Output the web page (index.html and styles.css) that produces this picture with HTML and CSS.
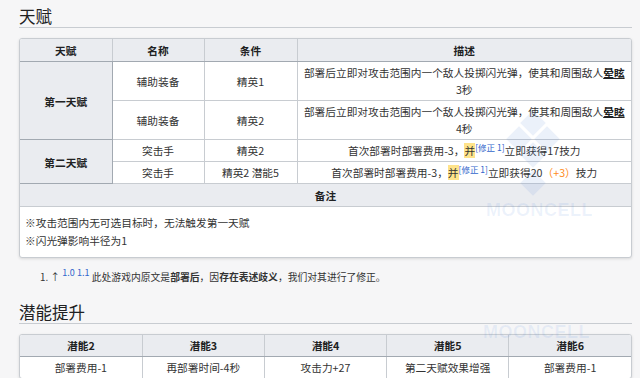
FILE: index.html
```html
<!DOCTYPE html>
<html lang="zh">
<head>
<meta charset="utf-8">
<link rel="stylesheet" href="styles.css">
</head>
<body>
<div class="page">
  <h2 class="heading">天赋</h2>
  <div class="tbl-wrap">
    <table class="tbl talent">
      <colgroup><col class="c1"><col class="c2"><col class="c3"><col></colgroup>
      <tr><th>天赋</th><th>名称</th><th>条件</th><th>描述</th></tr>
      <tr><th rowspan="2" class="side">第一天赋</th><td>辅助装备</td><td>精英1</td><td>部署后立即对攻击范围内一个敌人投掷闪光弹，使其和周围敌人<span class="term">晕眩</span><br>3秒</td></tr>
      <tr><td>辅助装备</td><td>精英2</td><td>部署后立即对攻击范围内一个敌人投掷闪光弹，使其和周围敌人<span class="term">晕眩</span><br>4秒</td></tr>
      <tr><th rowspan="2" class="side">第二天赋</th><td>突击手</td><td>精英2</td><td>首次部署时部署费用-3，<span class="hl">并</span><sup class="ref">[修正 1]</sup>立即获得17技力</td></tr>
      <tr><td>突击手</td><td>精英2 潜能5</td><td>首次部署时部署费用-3，<span class="hl">并</span><sup class="ref">[修正 1]</sup>立即获得20<span class="up">（+3）</span>技力</td></tr>
      <tr><th colspan="4">备注</th></tr>
      <tr><td colspan="4" class="notes">※攻击范围内无可选目标时，无法触发第一天赋<br>※闪光弹影响半径为1</td></tr>
    </table>
  </div>
  <div class="footnote">1. ↑ <sup class="ref">1.0</sup> <sup class="ref">1.1</sup> 此处游戏内原文是<b>部署后</b>，因<b>存在表述歧义</b>，我们对其进行了修正。</div>
  <h2 class="heading second">潜能提升</h2>
  <div class="tbl-wrap">
    <table class="tbl potential">
      <tr><th>潜能2</th><th>潜能3</th><th>潜能4</th><th>潜能5</th><th>潜能6</th></tr>
      <tr><td>部署费用-1</td><td>再部署时间-4秒</td><td>攻击力+27</td><td>第二天赋效果增强</td><td>部署费用-1</td></tr>
    </table>
  </div>
</div>
<div class="wm wm-logo">
  <svg width="70" height="90" viewBox="0 0 70 90">
    <g fill="#4a7fd6">
      <rect x="26" y="4" width="18" height="18" transform="rotate(45 35 13)"/>
      <rect x="12" y="20" width="18" height="18" transform="rotate(45 21 29)"/>
      <rect x="40" y="20" width="18" height="18" transform="rotate(45 49 29)"/>
      <rect x="26" y="36" width="18" height="18" transform="rotate(45 35 45)"/>
      <rect x="26" y="64" width="18" height="18" transform="rotate(45 35 73)"/>
    </g>
  </svg>
</div>
<div class="wm wm-text one">MOONCELL</div>
<div class="wm wm-text two">MOONCELL</div>
</body>
</html>
```
FILE: styles.css
```css
html, body {
  margin: 0;
  padding: 0;
}
body {
  background: #f6f6f7;
  font-family: "Noto Sans CJK SC", "Noto Sans", sans-serif;
  color: #202122;
  width: 640px;
  height: 378px;
  overflow: hidden;
  position: relative;
}
.page {
  padding: 5px 8px 0 19px;
}
.heading {
  margin: 0;
  font-size: 16.5px;
  font-weight: normal;
  line-height: 22px;
  border-bottom: 1px solid #c8ccd1;
  color: #202122;
}
.heading.second {
  margin-top: 15px;
}
.tbl-wrap {
  margin-top: 10px;
  border: 1px solid #c8ccd1;
  border-radius: 3px;
  overflow: hidden;
  box-shadow: 0 1px 3px rgba(0,0,0,0.12);
  background: #fff;
}
.tbl {
  width: 100%;
  border-collapse: collapse;
  table-layout: fixed;
  font-size: 10.7px;
  line-height: 17px;
}
.tbl th, .tbl td {
  border: 1px solid #c8ccd1;
  padding: 2px 4px;
  text-align: center;
  vertical-align: middle;
}
.tbl tr:first-child th { border-top: 0; }
.tbl tr th:first-child, .tbl tr td:first-child { border-left: 0; }
.tbl tr th:last-child, .tbl tr td:last-child { border-right: 0; }
.tbl tr:last-child td { border-bottom: 0; }
.tbl th {
  background: #eaecf0;
  font-weight: bold;
  padding-top: 3px;
  padding-bottom: 2px;
}
.tbl th + th { border-left-color: #a2a9b1; }
.tbl tr:first-child th { border-bottom-color: #a2a9b1; }
.tbl th.side { border-bottom-color: #a2a9b1; border-right-color: #a2a9b1; }
.talent .c1, .talent .c2 { width: 92px; }
.talent .c3 { width: 93px; }
.talent td { color: #333; }
.talent td.notes {
  text-align: left;
  padding: 7px 5px 7px 5px;
  line-height: 18px;
  border-left: 0;
}
.term {
  font-weight: bold;
  text-decoration: underline;
  color: #202122;
}
.hl {
  background: #ffe38a;
}
.ref {
  color: #3366cc;
  font-size: 8.5px;
  line-height: 0;
  vertical-align: 4px;
}
.up {
  color: #ff8c1a;
}
.footnote {
  margin-top: 10px;
  padding-left: 21px;
  font-size: 9.8px;
  line-height: 18px;
  color: #333;
}
.footnote .ref {
  font-size: 9px;
  vertical-align: 5px;
}
.potential td, .potential th { padding-top: 2px; padding-bottom: 2px; }
.potential td { color: #333; }
.wm {
  position: absolute;
  pointer-events: none;
}
.wm-logo {
  left: 498px;
  top: 110px;
  opacity: 0.1;
}
.wm-text {
  font-family: "Liberation Sans", sans-serif;
  font-weight: bold;
  font-size: 18px;
  letter-spacing: 0.5px;
  color: rgba(60, 120, 220, 0.09);
}
.wm-text.one { left: 486px; top: 200px; }
.wm-text.two { left: 483px; top: 322px; }
```
